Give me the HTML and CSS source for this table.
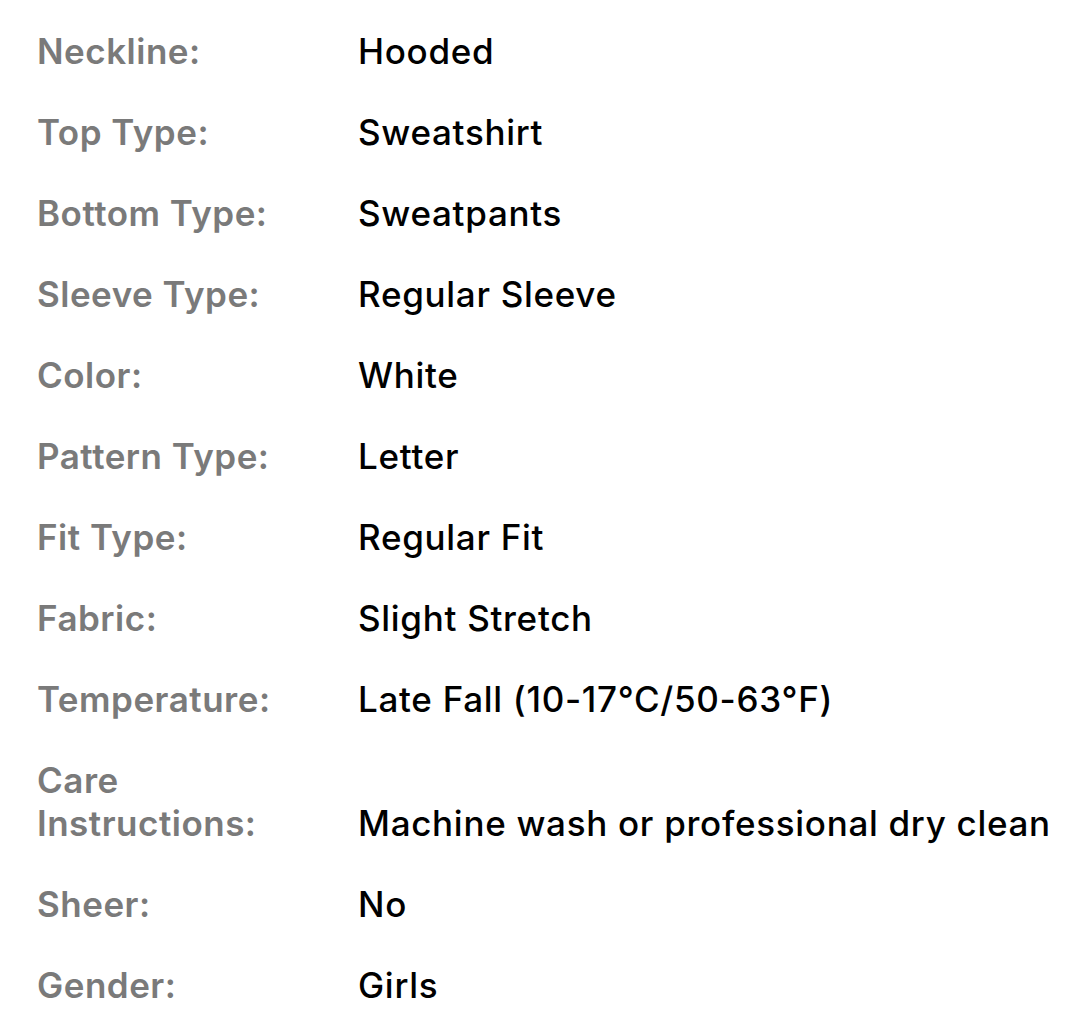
FILE: index.html
```html
<!DOCTYPE html>
<html>
<head>
<meta charset="utf-8">
<link rel="stylesheet" href="styles.css">
</head>
<body>
<div class="specs">
  <div class="row"><div class="label">Neckline:</div><div class="value">Hooded</div></div>
  <div class="row"><div class="label">Top Type:</div><div class="value">Sweatshirt</div></div>
  <div class="row"><div class="label">Bottom Type:</div><div class="value">Sweatpants</div></div>
  <div class="row"><div class="label">Sleeve Type:</div><div class="value">Regular Sleeve</div></div>
  <div class="row"><div class="label">Color:</div><div class="value">White</div></div>
  <div class="row"><div class="label">Pattern Type:</div><div class="value">Letter</div></div>
  <div class="row"><div class="label">Fit Type:</div><div class="value">Regular Fit</div></div>
  <div class="row"><div class="label">Fabric:</div><div class="value">Slight Stretch</div></div>
  <div class="row"><div class="label">Temperature:</div><div class="value">Late Fall (10-17°C/50-63°F)</div></div>
  <div class="row"><div class="label">Care<br>Instructions:</div><div class="value">Machine wash or professional dry clean</div></div>
  <div class="row"><div class="label">Sheer:</div><div class="value">No</div></div>
  <div class="row"><div class="label">Gender:</div><div class="value">Girls</div></div>
</div>
</body>
</html>
```
FILE: styles.css
```css
html, body {
  margin: 0;
  padding: 0;
  background: #ffffff;
}
body {
  font-family: Inter, "Noto Sans", sans-serif;
}
.specs {
  display: flex;
  flex-direction: column;
  gap: 38px;
  padding: 30px 0 0 37px;
}
.row {
  display: flex;
  align-items: flex-end;
  font-size: 35px;
  line-height: 43px;
}
.label {
  width: 321px;
  flex: none;
  color: #7a7a7a;
  font-weight: 600;
  letter-spacing: 0.5px;
}
.value {
  color: #000000;
  font-weight: 500;
  letter-spacing: 0.7px;
  white-space: nowrap;
}
```
